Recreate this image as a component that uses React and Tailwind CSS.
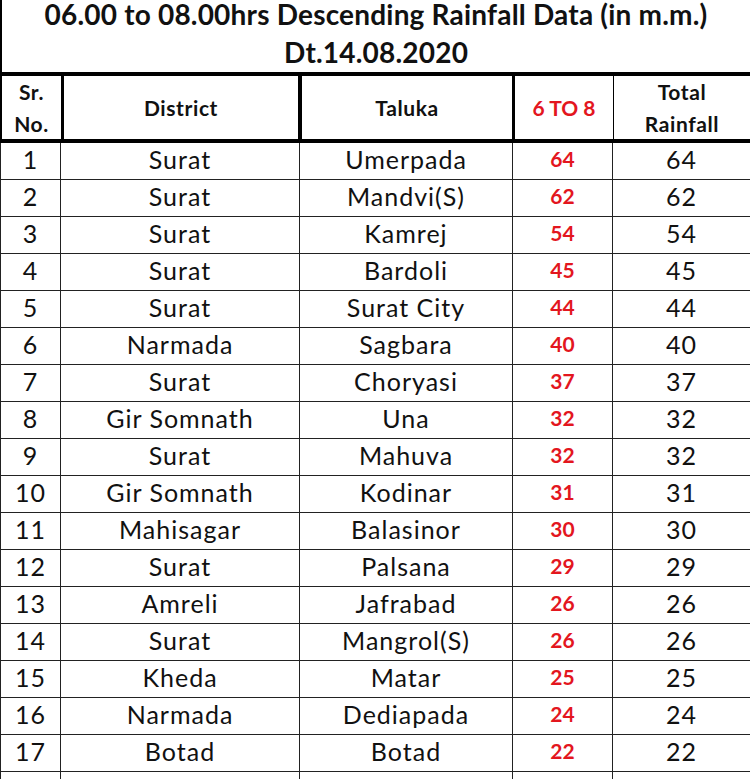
import React from "react";

const rows = [
  [1, "Surat", "Umerpada", 64],
  [2, "Surat", "Mandvi(S)", 62],
  [3, "Surat", "Kamrej", 54],
  [4, "Surat", "Bardoli", 45],
  [5, "Surat", "Surat City", 44],
  [6, "Narmada", "Sagbara", 40],
  [7, "Surat", "Choryasi", 37],
  [8, "Gir Somnath", "Una", 32],
  [9, "Surat", "Mahuva", 32],
  [10, "Gir Somnath", "Kodinar", 31],
  [11, "Mahisagar", "Balasinor", 30],
  [12, "Surat", "Palsana", 29],
  [13, "Amreli", "Jafrabad", 26],
  [14, "Surat", "Mangrol(S)", 26],
  [15, "Kheda", "Matar", 25],
  [16, "Narmada", "Dediapada", 24],
  [17, "Botad", "Botad", 22],
  [18, "Tapi", "Kukarmunda", 21],
];

const font = { fontFamily: "Lato, 'Open Sans', sans-serif" };

const App = () => {
  return (
    <div className="w-[750px] h-[779px] overflow-hidden bg-white text-[#111]" style={font}>
      {/* Title */}
      <div className="h-[72px] overflow-hidden border-l-2 border-black">
        <div className="-mt-[5px] text-center text-[28px] leading-[38px] font-bold tracking-[0.2px]">
          <div>06.00 to 08.00hrs Descending Rainfall Data (in m.m.)</div>
          <div>Dt.14.08.2020</div>
        </div>
      </div>

      {/* Header */}
      <div className="grid grid-cols-[62px_238px_213px_99px_1fr] h-[71px] border-t-4 border-b-4 border-l-2 border-black text-[21px] leading-[32px] font-bold tracking-[0.6px]">
        <div className="flex items-center justify-center text-center border-r-[3px] border-black">
          Sr.<br />No.
        </div>
        <div className="flex items-center justify-center border-r-4 border-black">District</div>
        <div className="flex items-center justify-center border-r-[3px] border-black">Taluka</div>
        <div className="flex items-center justify-center border-r border-black text-[#e3161e] tracking-normal">6 TO 8</div>
        <div className="flex items-center justify-center text-center">
          Total<br />Rainfall
        </div>
      </div>

      {/* Rows */}
      {rows.map(([sr, district, taluka, value]) => (
        <div
          key={sr}
          className="grid grid-cols-[60px_239px_213px_100px_1fr] h-[37px] border-b border-l border-[#222] text-[25px] leading-[28px] tracking-[1px]"
        >
          <div className="flex items-center justify-center pb-[5px] border-r border-[#222]">{sr}</div>
          <div className="flex items-center justify-center pb-[5px] border-r border-[#222]">{district}</div>
          <div className="flex items-center justify-center pb-[5px] border-r border-[#222]">{taluka}</div>
          <div className="flex items-center justify-center pb-[5px] border-r border-[#222] text-[21px] font-bold tracking-normal text-[#e3161e]">
            {value}
          </div>
          <div className="flex items-center justify-center pb-[5px]">{value}</div>
        </div>
      ))}
    </div>
  );
};

export default App;
